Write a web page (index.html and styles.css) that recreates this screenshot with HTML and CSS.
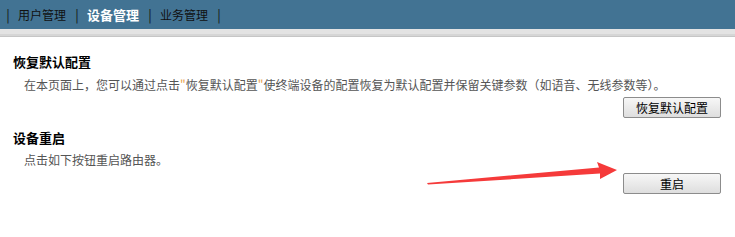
FILE: index.html
```html
<!DOCTYPE html>
<html lang="zh-CN">
<head>
    <meta charset="UTF-8">
    <title>设备管理</title>
    <link rel="stylesheet" href="styles.css">
</head>
<body>
    <div class="topbar">
        <span class="sep">|</span>
        <a class="nav-item">用户管理</a>
        <span class="sep">|</span>
        <a class="nav-item active">设备管理</a>
        <span class="sep">|</span>
        <a class="nav-item">业务管理</a>
        <span class="sep">|</span>
    </div>
    <div class="topbar-shadow"></div>

    <div class="content">
        <div class="section">
            <h2>恢复默认配置</h2>
            <p class="desc">在本页面上，您可以通过点击<span class="quote">"</span>恢复默认配置<span class="quote">"</span>使终端设备的配置恢复为默认配置并保留关键参数（如语音、无线参数等）。</p>
            <div class="actions">
                <button type="button">恢复默认配置</button>
            </div>
        </div>

        <div class="section second">
            <h2>设备重启</h2>
            <p class="desc">点击如下按钮重启路由器。</p>
            <div class="actions">
                <button type="button">重启</button>
            </div>
        </div>
    </div>

    <!-- annotation arrow drawn over the page -->
    <svg class="arrow" width="200" height="32" viewBox="0 0 200 32">
        <polygon points="7,28 179,12.5 177,7 197,15 180,24 180,18.5 8,29.5" fill="#f53a3a"/>
    </svg>
</body>
</html>
```

FILE: styles.css
```css
body {
    margin: 0;
    padding: 0;
    font-family: "Noto Sans CJK SC", "Liberation Sans", sans-serif;
    background: #fff;
    position: relative;
    height: 237px;
    overflow: hidden;
}
.topbar {
    height: 29px;
    background-color: #427393;
    display: flex;
    align-items: center;
    padding-left: 6px;
    font-size: 12px;
    line-height: 14px;
    color: #111;
}
.sep {
    width: 4px;
    text-align: center;
    font-size: 13px;
}
.nav-item {
    margin: 0 9px 0 8px;
    color: #111;
}
.nav-item.active {
    color: #fff;
    font-weight: bold;
    font-size: 13px;
}
.topbar-shadow {
    height: 5px;
    background: #e3e3e3;
    border-bottom: 2px solid #d6d6d6;
    box-shadow: 0 1px 0 #c6c6c6;
}
.content {
    padding: 0 14px 0 13px;
}
.section h2 {
    margin: 18px 0 0;
    font-size: 13px;
    line-height: 16px;
    color: #000;
}
.section.second h2 {
    margin-top: 12px;
}
.desc {
    margin: 7px 0 0 11px;
    font-size: 12px;
    line-height: 16px;
    color: #555;
}
.section.second .desc {
    margin-top: 6px;
}
.quote {
    color: #e8a04a;
}
.actions {
    display: flex;
    justify-content: flex-end;
    margin-top: 4px;
}
.section.second .actions {
    margin-top: 5px;
}
button {
    width: 98px;
    height: 21px;
    padding: 0;
    border: 1px solid #8c8c8c;
    border-radius: 2px;
    background: linear-gradient(#f7f7f7, #dedede);
    font-family: "Noto Sans CJK SC", sans-serif;
    font-size: 12px;
    line-height: 19px;
    color: #000;
}
.arrow {
    position: absolute;
    left: 420px;
    top: 155px;
}
```
